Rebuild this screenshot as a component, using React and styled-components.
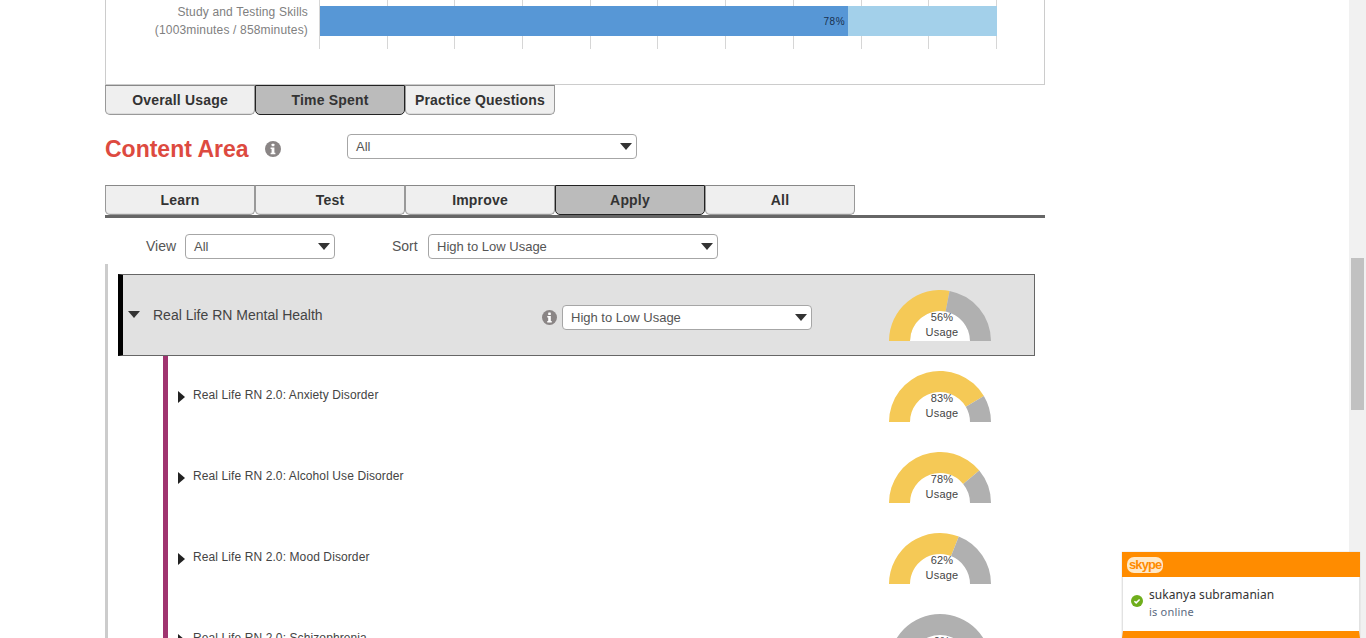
import React from "react";
import styled, { createGlobalStyle } from "styled-components";

const Global = createGlobalStyle`
  html, body { margin: 0; padding: 0; height: 100%; overflow: hidden; background: #fff; }
  body { font-family: "Liberation Sans", Arial, sans-serif; color: #333; }
  * { box-sizing: border-box; }
`;

const Viewport = styled.div`
  position: relative;
  display: flex;
  width: 1366px;
  height: 638px;
  overflow: hidden;
`;
const Page = styled.main`
  flex: 1;
  padding-left: 105px;
  min-width: 0;
`;
const Content = styled.div`
  width: 940px;
`;
const ScrollTrack = styled.div`
  width: 17px;
  height: 638px;
  background: #f1f1f1;
  padding: 258px 2px 0;
`;
const ScrollThumb = styled.div`
  height: 152px;
  background: #c1c1c1;
`;

const ChartPanel = styled.section`
  height: 85px;
  border: 1px solid #ccc;
  border-top: none;
  display: flex;
  align-items: flex-start;
`;
const ChartLabel = styled.div`
  width: 202px;
  padding-top: 3px;
  text-align: right;
  font-size: 12px;
  line-height: 18px;
  letter-spacing: 0.17px;
  color: #808080;
`;
const Plot = styled.div`
  position: relative;
  margin-left: 11px;
  width: 678px;
  height: 49px;
  display: flex;
  flex-direction: column;
  padding-top: 6px;
`;
const GridLines = styled.div`
  position: absolute;
  inset: 0;
  display: flex;
  justify-content: space-between;
`;
const GridLine = styled.span`
  width: 1px;
  background: #d6d6d6;
`;
const Bar = styled.div`
  position: relative;
  height: 30px;
  margin-left: 1px;
  background: #a3d0ea;
`;
const BarFill = styled.div`
  height: 30px;
  background: #5797d6;
  display: flex;
  align-items: center;
  justify-content: flex-end;
  padding-right: 3px;
  font-size: 10px;
  letter-spacing: 0.5px;
  color: #18304e;
`;

const TabRow = styled.div`
  display: flex;
`;
const Tab = styled.button`
  width: 150px;
  height: 30px;
  padding: 0;
  font-family: inherit;
  font-size: 14px;
  font-weight: 700;
  letter-spacing: 0.18px;
  color: #333;
  background: ${(p) => (p.$active ? "#bbbbbb" : "#efefef")};
  border: 1px solid ${(p) => (p.$active ? "#222" : "#999")};
  border-top-color: ${(p) => (p.$active ? "#222" : "#888")};
  border-radius: 0 0 5px 5px;
  box-shadow: ${(p) => (p.$active ? "none" : "inset 0 -1px 0 #ddd")};
`;
const TitleRow = styled.div`
  display: flex;
  align-items: flex-start;
  height: 70px;
  padding-top: 19px;
`;
const Title = styled.h2`
  margin: 0;
  width: 160px;
  font-size: 23px;
  line-height: 30px;
  font-weight: 700;
  color: #dd4a40;
`;
const InfoWrap = styled.span`
  display: flex;
  width: 82px;
  padding-top: 7px;
`;
const Select = styled.div`
  display: flex;
  align-items: center;
  justify-content: space-between;
  width: ${(p) => p.$w}px;
  height: 25px;
  padding: 0 4px 0 8px;
  background: #fff;
  border: 1px solid #a6a6a6;
  border-radius: 4px;
  font-size: 13px;
  color: #555;
`;
const Caret = styled.i`
  width: 0;
  height: 0;
  border-left: 6px solid transparent;
  border-right: 6px solid transparent;
  border-top: 7px solid #333;
`;
const SecondTabs = styled(TabRow)`
  border-bottom: 3px solid #666;
`;
const FilterRow = styled.div`
  display: flex;
  align-items: center;
  height: 46px;
  padding: 10px 0 0 41px;
  font-size: 14px;
  color: #555;
`;
const FilterLabel = styled.span`
  width: ${(p) => p.$w}px;
`;
const FilterGap = styled.span`
  width: 57px;
`;
const Tree = styled.div`
  height: 400px;
  border-left: 3px solid #ccc;
  padding: 10px 0 0 10px;
`;
const Group = styled.div`
  display: flex;
  align-items: flex-start;
  width: 917px;
  height: 82px;
  background: #e1e1e1;
  border: 1px solid #666;
  border-left: 5px solid #000;
`;
const GroupCaret = styled(Caret)`
  margin: 36px 0 0 5px;
`;
const GroupName = styled.div`
  width: 389px;
  margin-left: 13px;
  padding-top: 31px;
  font-size: 14px;
  line-height: 18px;
  color: #444;
`;
const GroupControls = styled.div`
  display: flex;
  align-items: center;
  gap: 5px;
  margin-top: 30px;
  width: 347px;
`;
const Children = styled.div`
  margin-left: 45px;
  height: 400px;
  border-left: 5px solid #a03470;
`;
const Row = styled.div`
  display: flex;
  align-items: flex-start;
  height: 81px;
  padding-left: 10px;
`;
const RowCaret = styled.i`
  width: 0;
  height: 0;
  margin-top: 35px;
  border-top: 6px solid transparent;
  border-bottom: 6px solid transparent;
  border-left: 7px solid #222;
`;
const RowName = styled.div`
  width: 696px;
  margin-left: 8px;
  padding-top: 31px;
  font-size: 12px;
  line-height: 16px;
  letter-spacing: 0.1px;
  color: #444;
`;
const GaugeSlot = styled.div`
  position: relative;
  width: 102px;
  height: 51px;
  margin-top: ${(p) => p.$top}px;
`;
const GaugeText = styled.div`
  position: absolute;
  left: 21px;
  right: 17px;
  top: 20px;
  text-align: center;
  font-size: 11px;
  line-height: 15px;
  letter-spacing: 0.2px;
  color: #444;
`;

const Toast = styled.aside`
  position: absolute;
  left: 1122px;
  top: 552px;
  width: 238px;
  height: 86px;
  background: #fff;
  border-left: 1px solid #e2e2e2;
  border-right: 1px solid #e2e2e2;
  border-bottom: 7px solid #ff8c00;
  box-shadow: 0 0 1px #bbb;
`;
const ToastHead = styled.div`
  display: flex;
  align-items: center;
  height: 25px;
  margin: 0 -1px;
  padding-left: 5px;
  background: #ff8c00;
`;
const ToastBody = styled.div`
  display: flex;
  padding: 9px 0 0 8px;
  gap: 6px;
`;
const StatusIcon = styled.span`
  display: flex;
  margin-top: 9px;
`;
const ToastName = styled.div`
  font-family: "Noto Sans", "Open Sans", sans-serif;
  font-size: 12px;
  line-height: 17px;
  letter-spacing: 0.05px;
  color: #333;
`;
const ToastStatus = styled.div`
  font-family: "Noto Sans", "Open Sans", sans-serif;
  font-size: 11px;
  line-height: 18px;
  letter-spacing: 0.2px;
  color: #5b6a80;
`;
const SkypeText = styled.span`
  font-family: "Liberation Sans", Arial, sans-serif;
  font-size: 13px;
  font-weight: 700;
  letter-spacing: -0.9px;
  line-height: 15px;
  padding: 0 2px 1px 2px;
  color: #ff8c00;
  background: #ffe9c8;
  border-radius: 7px;
`;

function Info({ size = 16 }) {
  return (
    <svg width={size} height={size} viewBox="0 0 16 16">
      <circle cx="8" cy="8" r="8" fill="#8a8585" />
      <rect x="6.6" y="2.7" width="2.8" height="2.6" rx="0.6" fill="#fff" />
      <path d="M5.6 6.5h3.8v5.2h1v1.6H5.6v-1.6h1V8.1h-1z" fill="#fff" />
    </svg>
  );
}

function Gauge({ pct, white }) {
  const R = 51, r = 30, cx = 51, cy = 51;
  const a = Math.PI * (1 - pct / 100);
  const p = (rad, ang) => `${(cx + rad * Math.cos(ang)).toFixed(2)} ${(cy - rad * Math.sin(ang)).toFixed(2)}`;
  const seg = (from, to, color) => (
    <path
      fill={color}
      d={`M${p(R, from)} A${R} ${R} 0 0 1 ${p(R, to)} L${p(r, to)} A${r} ${r} 0 0 0 ${p(r, from)} Z`}
    />
  );
  return (
    <svg width="102" height="51" viewBox="0 0 102 51" style={{ display: "block" }}>
      {white && <path fill="#fff" d="M21 51a30 30 0 0 1 60 0z" />}
      {pct > 0 && seg(Math.PI, a, "#f5c956")}
      {pct < 100 && seg(a, 0, "#b0b0b0")}
    </svg>
  );
}

function GaugeBlock({ pct, top, white }) {
  return (
    <GaugeSlot $top={top}>
      <Gauge pct={pct} white={white} />
      <GaugeText>
        {pct}%<br />Usage
      </GaugeText>
    </GaugeSlot>
  );
}

const rows = [
  ["Real Life RN 2.0: Anxiety Disorder", 83],
  ["Real Life RN 2.0: Alcohol Use Disorder", 78],
  ["Real Life RN 2.0: Mood Disorder", 62],
  ["Real Life RN 2.0: Schizophrenia", 0],
];

export default function App() {
  return (
    <Viewport>
      <Global />
      <Page>
        <Content>
          <ChartPanel>
            <ChartLabel>
              Study and Testing Skills
              <br />
              (1003minutes / 858minutes)
            </ChartLabel>
            <Plot>
              <GridLines>
                {Array.from({ length: 11 }, (_, i) => (
                  <GridLine key={i} />
                ))}
              </GridLines>
              <Bar>
                <BarFill style={{ width: "78%" }}>78%</BarFill>
              </Bar>
            </Plot>
          </ChartPanel>
          <TabRow>
            <Tab>Overall Usage</Tab>
            <Tab $active>Time Spent</Tab>
            <Tab>Practice Questions</Tab>
          </TabRow>
          <TitleRow>
            <Title>Content Area</Title>
            <InfoWrap>
              <Info />
            </InfoWrap>
            <Select $w={290}>
              All
              <Caret />
            </Select>
          </TitleRow>
          <SecondTabs>
            <Tab>Learn</Tab>
            <Tab>Test</Tab>
            <Tab>Improve</Tab>
            <Tab $active>Apply</Tab>
            <Tab>All</Tab>
          </SecondTabs>
          <FilterRow>
            <FilterLabel $w={39}>View</FilterLabel>
            <Select $w={150}>
              All
              <Caret />
            </Select>
            <FilterGap />
            <FilterLabel $w={36}>Sort</FilterLabel>
            <Select $w={290}>
              High to Low Usage
              <Caret />
            </Select>
          </FilterRow>
          <Tree>
            <Group>
              <GroupCaret />
              <GroupName>Real Life RN Mental Health</GroupName>
              <GroupControls>
                <Info size={15} />
                <Select $w={250}>
                  High to Low Usage
                  <Caret />
                </Select>
              </GroupControls>
              <GaugeBlock pct={56} top={15} white />
            </Group>
            <Children>
              {rows.map(([name, pct]) => (
                <Row key={name}>
                  <RowCaret />
                  <RowName>{name}</RowName>
                  <GaugeBlock pct={pct} top={15} />
                </Row>
              ))}
            </Children>
          </Tree>
        </Content>
      </Page>
      <ScrollTrack>
        <ScrollThumb />
      </ScrollTrack>
      <Toast>
        <ToastHead>
          <SkypeText>skype</SkypeText>
        </ToastHead>
        <ToastBody>
          <StatusIcon>
            <svg width="12" height="12" viewBox="0 0 12 12">
              <circle cx="6" cy="6" r="6" fill="#6fae1c" />
              <path d="M3.4 6.2l1.8 1.7 3.4-3.4" fill="none" stroke="#fff" strokeWidth="1.5" />
            </svg>
          </StatusIcon>
          <div>
            <ToastName>sukanya subramanian</ToastName>
            <ToastStatus>is online</ToastStatus>
          </div>
        </ToastBody>
      </Toast>
    </Viewport>
  );
}
